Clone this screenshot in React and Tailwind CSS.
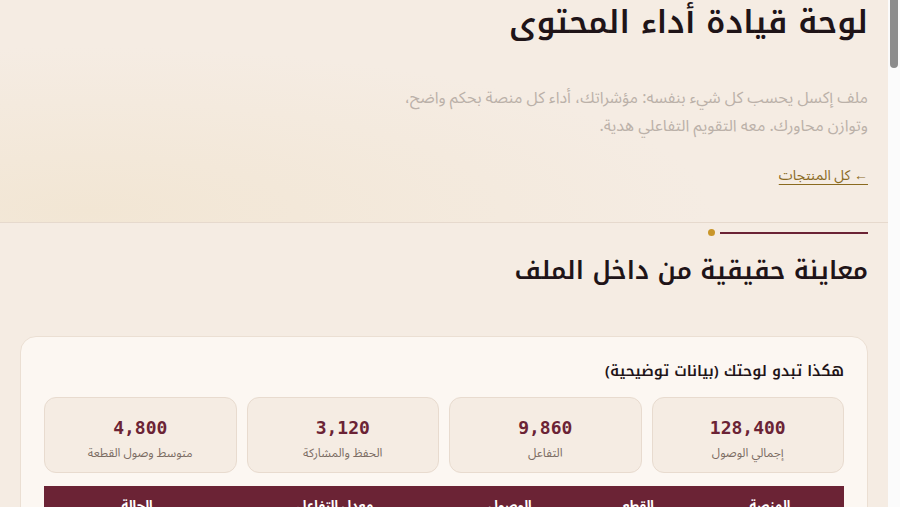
import { Fragment } from "react";

// بيانات توضيحية للوحة
const stats = [
  { value: "128,400", label: "إجمالي الوصول" },
  { value: "9,860", label: "التفاعل" },
  { value: "3,120", label: "الحفظ والمشاركة" },
  { value: "4,800", label: "متوسط وصول القطعة" },
];

const columns = [
  { title: "المنصة", w: "w-[148px]" },
  { title: "القطع", w: "w-[116px]" },
  { title: "الوصول", w: "w-[140px]" },
  { title: "معدل التفاعل", w: "w-[210px]" },
  { title: "الحالة", w: "w-[186px]" },
];

const rows = [
  ["إنستغرام", "12", "46,200", "8.4%", "ممتاز"],
  ["تيك توك", "9", "38,900", "7.1%", "جيد"],
  ["إكس", "14", "21,300", "4.2%", "يحتاج دعم"],
  ["لينكدإن", "6", "12,400", "5.6%", "جيد"],
  ["يوتيوب", "4", "9,600", "6.3%", "جيد"],
];

const features = [
  { title: "مؤشرات تلقائية", text: "كل الأرقام تُحسب مباشرة بمجرد إدخال بيانات القطعة." },
  { title: "حكم واضح لكل منصة", text: "ممتاز، جيد، أو يحتاج دعم — بدون تخمين." },
  { title: "توازن المحاور", text: "اعرف أي محور يأخذ أكثر من حقه وأيها مُهمل." },
  { title: "تقويم تفاعلي", text: "هدية مع الملف لتخطيط محتوى الشهر كاملًا." },
];

const kufi = "font-['Noto_Kufi_Arabic',sans-serif]";

export default function App() {
  return (
    <div className="flex h-screen bg-[#f5ece3]">
      <main
        dir="rtl"
        className="flex-1 overflow-y-auto text-[#1f1418] font-['Noto_Sans_Arabic',sans-serif] [scrollbar-width:none]"
      >
        {/* الواجهة العلوية */}
        <header className="border-b border-[#e6d9cd] bg-[radial-gradient(ellipse_at_10%_95%,#f2e6d4_0%,#f5ece3_55%)] px-5 pb-[35px]">
          <h1 className={`${kufi} text-[31.5px] font-semibold leading-[46px]`}>لوحة قيادة أداء المحتوى</h1>
          <p className="mt-[38px] max-w-[470px] text-[16px] leading-[28px] text-[#bbb1a9]">
            ملف إكسل يحسب كل شيء بنفسه: مؤشراتك، أداء كل منصة بحكم واضح، وتوازن محاورك. معه التقويم التفاعلي هدية.
          </p>
          <a href="#" className="mt-[25px] inline-block text-[14px] text-[#8a6a1f] underline underline-offset-4">
            ← كل المنتجات
          </a>
        </header>

        {/* المعاينة */}
        <section className="px-5 pt-[6px] pb-16">
          <div className="flex items-center gap-[5px]">
            <span className="h-[6px] w-[148px] border-t-2 border-[#6b2335] translate-y-[2px]" />
            <span className="h-[7px] w-[7px] rounded-full bg-[#c9962a]" />
          </div>
          <h2 className={`${kufi} mt-[17px] text-[25px] font-semibold leading-[36px]`}>معاينة حقيقية من داخل الملف</h2>

          <div className="mt-[47px] rounded-2xl border border-[#ebdfd3] bg-[#fcf7f2] px-[23px] pt-[22px] pb-6">
            <h3 className={`${kufi} text-[15px] font-semibold leading-[24px]`}>هكذا تبدو لوحتك (بيانات توضيحية)</h3>
            <div className="mt-[14px] grid grid-cols-4 gap-[10px]">
              {stats.map((s) => (
                <div key={s.label} className="flex h-[76px] flex-col items-center rounded-xl border border-[#e8dbcf] bg-[#f5ece3] pt-[18px]">
                  <div className="font-['DejaVu_Sans_Mono',monospace] text-[18px] font-bold leading-[24px] text-[#6b2335]" dir="ltr">
                    {s.value}
                  </div>
                  <div className="mt-[5px] text-[12px] leading-[18px] text-[#7c6c63]">{s.label}</div>
                </div>
              ))}
            </div>

            <table className="mt-[13px] w-full border-collapse text-[13px]">
              <thead>
                <tr className="bg-[#6b2335] text-white">
                  {columns.map((c) => (
                    <th key={c.title} className={`${c.w} py-[10px] text-center font-bold leading-[20px]`}>
                      {c.title}
                    </th>
                  ))}
                </tr>
              </thead>
              <tbody>
                {rows.map((r, i) => (
                  <tr key={i} className="border-b border-[#ebdfd3]">
                    {r.map((cell, j) => (
                      <td key={j} className="py-3 text-center text-[#3d2b30]">
                        {cell}
                      </td>
                    ))}
                  </tr>
                ))}
              </tbody>
            </table>
          </div>

          <h2 className={`${kufi} mt-20 text-[25px] font-semibold leading-[36px]`}>ماذا ستحصل عليه</h2>
          <div className="mt-8 grid grid-cols-2 gap-5">
            {features.map((f) => (
              <Fragment key={f.title}>
                <div className="rounded-2xl border border-[#ebdfd3] bg-[#fcf7f2] p-6">
                  <h4 className={`${kufi} text-[16px] font-semibold`}>{f.title}</h4>
                  <p className="mt-2 text-[15px] leading-7 text-[#7c6c63]">{f.text}</p>
                </div>
              </Fragment>
            ))}
          </div>
        </section>
      </main>

      {/* شريط التمرير */}
      <aside className="w-[12px] shrink-0 bg-[#fbfbfb] px-[2px]">
        <div className="h-[68px] rounded-b-full bg-[#8c8c8c]" />
      </aside>
    </div>
  );
}
